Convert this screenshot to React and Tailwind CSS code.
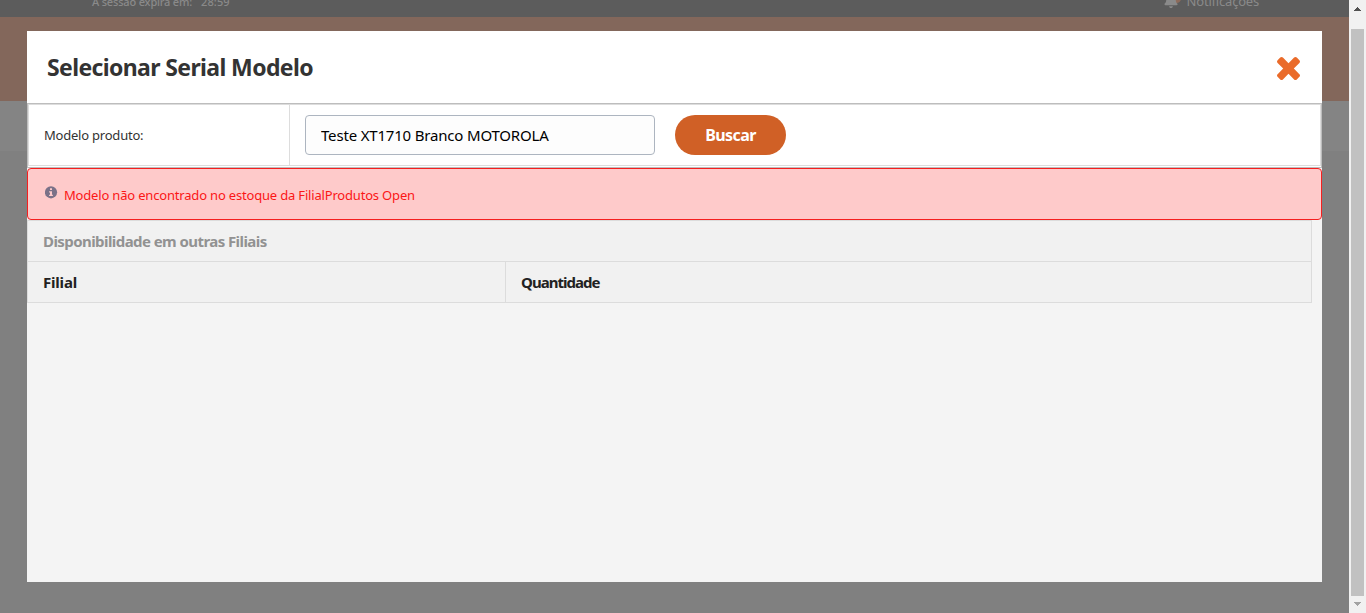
import { FaBell } from 'react-icons/fa';

function Scrollbar() {
  return (
    <div className="flex w-[17px] shrink-0 flex-col items-center bg-[#f1f1f1]">
      <div className="flex h-[29px] w-full justify-center pt-[7px]">
        <svg width="7" height="4" viewBox="0 0 7 4" shapeRendering="crispEdges" fill="#505050">
          <path d="M3 0h1v1h1v1h1v1h1v1H0V3h1V2h1V1h1z" />
        </svg>
      </div>
      <div className="h-[567px] w-[13px] bg-[#c1c1c1]" />
      <div className="pt-[6px]">
        <svg width="7" height="4" viewBox="0 0 7 4" shapeRendering="crispEdges" fill="#a3a3a3">
          <path d="M0 0h7v1H6v1H5v1H4v1H3V3H2V2H1V1H0z" />
        </svg>
      </div>
    </div>
  );
}

function Backdrop() {
  return (
    <div className="flex h-full flex-col">
      <div className="flex h-[17px] items-start justify-between overflow-hidden bg-[#5c5c5c] pr-[90px] pl-[92px] text-[#8a8a8a]">
        <div className="-mt-[6px] flex gap-[9px] text-[11px] leading-[15px] font-medium whitespace-nowrap">
          <span className="tracking-[-0.18px]">A sessão expira em:</span>
          <span className="tracking-[0.1px]">28:59</span>
        </div>
        <div className="-mt-[7px] flex gap-[7px] text-[13px] leading-[17px] whitespace-nowrap">
          <span className="relative h-4 w-4">
            <span className="absolute top-[1px] left-[8px] h-[9px] w-[9px] rounded-full bg-[#8d6b5b]" />
            <FaBell className="relative h-[15px] w-[14px]" />
          </span>
          <span className="tracking-[-0.2px]">Notificações</span>
        </div>
      </div>
      <div className="h-[84px] bg-[#83675b]" />
      <div className="h-[50px] bg-[#848484]" />
      <div className="flex-1 bg-[#808080]" />
    </div>
  );
}

function Modal() {
  return (
    <section className="flex h-[551px] w-[1295px] flex-col bg-[#f4f4f4]">
      <header className="flex h-[72px] items-center justify-between bg-white pr-[22px] pl-5">
        <h1 className="text-[23px] leading-8 font-bold tracking-[-0.62px] whitespace-nowrap text-[#333]">Selecionar Serial Modelo</h1>
        <button aria-label="Fechar" className="mt-[3px]">
          <svg width="23" height="23" viewBox="0 0 23 23" fill="#ea6b2a">
            <path d="M22.4 17.2Q23 17.8 23 18.5T22.4 19.8L19.8 22.4Q19.2 23 18.4 23T17.1 22.4L11.5 16.8L5.9 22.4Q5.3 23 4.6 23T3.2 22.4L.6 19.8Q0 19.2 0 18.5T.6 17.2L6.2 11.5L.6 5.9Q0 5.3 0 4.6T.6 3.2L3.2.6Q3.8 0 4.6 0T5.9.6L11.5 6.2L17.1.6Q17.7 0 18.4 0T19.8.6L22.4 3.2Q23 3.8 23 4.6T22.4 5.9L16.8 11.5Z" />
          </svg>
        </button>
      </header>
      <div className="h-[65px] border border-[#bdbdbd] bg-white">
        <div className="flex h-[62px] border border-[#ddd]">
          <label className="flex h-[61px] w-[261px] items-center border-r border-b border-[#ddd] pl-[15px] text-[13px] tracking-[-0.22px] text-[#333]">
            <span className="mt-[1px]">Modelo produto:</span>
          </label>
          <div className="flex flex-1 items-center gap-5 pl-[15px]">
            <input
              className="h-10 w-[350px] rounded-[4px] border border-[#adb5c0] bg-[#fdfdfd] px-[15px] text-[15px] tracking-[-0.18px] text-black outline-none"
              defaultValue="Teste XT1710 Branco MOTOROLA"
            />
            <button className="h-10 w-[111px] rounded-full bg-[#d06026] text-[16px] font-bold tracking-[-0.6px] text-white">Buscar</button>
          </div>
        </div>
      </div>
      <div className="h-[52px] rounded-[4px] border border-[#f51f1f] bg-[#fecaca]">
        <div className="flex h-full gap-[6px] pl-[17px]">
          <svg className="mt-[17px]" width="13" height="13" viewBox="0 0 13 13">
            <circle cx="6" cy="6.3" r="6.1" fill="#7b7188" />
            <path fill="#fecaca" d="M5 2.3h2v1.8H5zM4.1 5.2H7v3.6h.9v1.2H4.1V8.8H5V6.4h-.9z" />
          </svg>
          <p className="mt-[16px] text-[13px] leading-5 tracking-[-0.18px] text-[#fb1616]">Modelo não encontrado no estoque da FilialProdutos Open</p>
        </div>
      </div>
      <div className="w-[1285px] border border-[#dcdcdc] bg-[#f1f1f1] text-[15px] font-bold">
        <div className="flex h-[41px] items-center border-b border-[#dcdcdc] pl-[15px] text-[#929292]">
          <span className="tracking-[-0.57px]">Disponibilidade em outras Filiais</span>
        </div>
        <div className="flex h-10 text-[#222]">
          <div className="flex w-[478px] items-center border-r border-[#dcdcdc] pl-[15px] tracking-[-0.2px]">Filial</div>
          <div className="flex items-center pl-[15px] tracking-[-0.98px]">Quantidade</div>
        </div>
      </div>
    </section>
  );
}

export default function App() {
  return (
    <div className="flex h-[613px] w-[1366px] overflow-hidden font-['Noto_Sans',sans-serif]">
      <main className="relative w-[1349px]">
        <Backdrop />
        <div className="absolute top-[31px] left-[27px]">
          <Modal />
        </div>
      </main>
      <Scrollbar />
    </div>
  );
}
